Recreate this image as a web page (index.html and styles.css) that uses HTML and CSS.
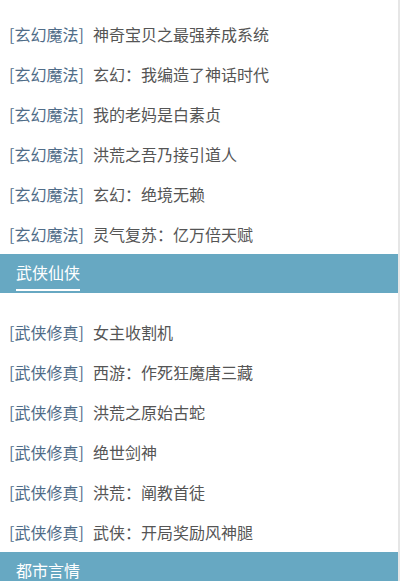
FILE: index.html
```html
<!DOCTYPE html>
<html lang="zh-CN">
<head>
<meta charset="utf-8">
<title>分类</title>
<link rel="stylesheet" href="styles.css">
</head>
<body>
<div class="page">
  <ul class="list first">
    <li class="row"><span class="cat">[玄幻魔法]</span><span class="title">神奇宝贝之最强养成系统</span></li>
    <li class="row"><span class="cat">[玄幻魔法]</span><span class="title">玄幻：我编造了神话时代</span></li>
    <li class="row"><span class="cat">[玄幻魔法]</span><span class="title">我的老妈是白素贞</span></li>
    <li class="row"><span class="cat">[玄幻魔法]</span><span class="title">洪荒之吾乃接引道人</span></li>
    <li class="row"><span class="cat">[玄幻魔法]</span><span class="title">玄幻：绝境无赖</span></li>
    <li class="row"><span class="cat">[玄幻魔法]</span><span class="title">灵气复苏：亿万倍天赋</span></li>
  </ul>
  <div class="head"><span class="head-text">武侠仙侠</span></div>
  <ul class="list">
    <li class="row"><span class="cat">[武侠修真]</span><span class="title">女主收割机</span></li>
    <li class="row"><span class="cat">[武侠修真]</span><span class="title">西游：作死狂魔唐三藏</span></li>
    <li class="row"><span class="cat">[武侠修真]</span><span class="title">洪荒之原始古蛇</span></li>
    <li class="row"><span class="cat">[武侠修真]</span><span class="title">绝世剑神</span></li>
    <li class="row"><span class="cat">[武侠修真]</span><span class="title">洪荒：阐教首徒</span></li>
    <li class="row"><span class="cat">[武侠修真]</span><span class="title">武侠：开局奖励风神腿</span></li>
  </ul>
  <div class="head"><span class="head-text plain">都市言情</span></div>
</div>
</body>
</html>
```
FILE: styles.css
```css
html, body {
  margin: 0;
  padding: 0;
  height: 100%;
  overflow: hidden;
  background: #ffffff;
}
body {
  font-family: "Noto Sans CJK SC", "Noto Sans", sans-serif;
  font-size: 16px;
}
.page {
  width: 398px;
  min-height: 100%;
  border-right: 2px solid #e6e6e6;
}
.list {
  list-style: none;
  margin: 0;
  padding: 19px 0 0 0;
}
.list.first {
  padding-top: 14px;
}
.row {
  height: 40px;
  line-height: 40px;
  display: flex;
  align-items: center;
  padding-left: 9px;
  white-space: nowrap;
}
.cat {
  color: #4f6c88;
  width: 84px;
}
.title {
  color: #555555;
}
.head {
  height: 39px;
  background: #67a8c2;
  padding-left: 16px;
  display: flex;
  align-items: flex-end;
}
.head-text {
  color: #ffffff;
  font-size: 16px;
  line-height: 34px;
  border-bottom: 2px solid #ffffff;
  margin-bottom: 2px;
}
.head-text.plain {
  border-bottom-color: transparent;
}
```
